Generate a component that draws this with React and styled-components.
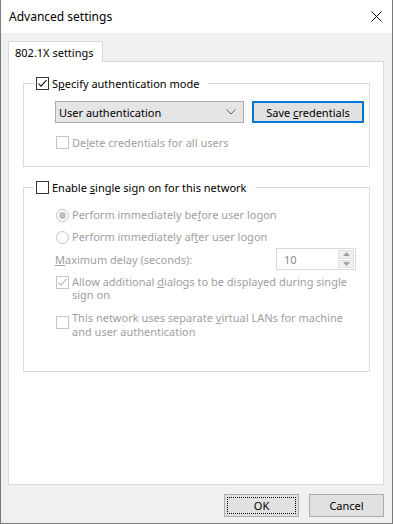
import React from "react";
import styled, { createGlobalStyle } from "styled-components";

const GlobalStyle = createGlobalStyle`
  html, body { margin: 0; padding: 0; }
  body {
    width: 393px;
    height: 524px;
    overflow: hidden;
    font-family: "Noto Sans", "Liberation Sans", sans-serif;
    font-size: 11px;
    color: #000;
    background: #fff;
  }
  * { box-sizing: border-box; }
`;

const Window = styled.div`
  width: 393px;
  height: 524px;
  display: flex;
  flex-direction: column;
  background: #f0f0f0;
  border: 1px solid #7a7a7a;
  border-top: none;
`;

const TitleBar = styled.div`
  height: 33px;
  flex: none;
  background: #fff;
  display: flex;
  align-items: center;
  justify-content: space-between;
  padding: 0 10px 0 8px;
  font-size: 12px;
`;

const CloseIcon = () => (
  <svg width="11" height="11" viewBox="0 0 11 11">
    <path d="M0.5 0.5 L10.5 10.5 M10.5 0.5 L0.5 10.5" stroke="#000" strokeWidth="1" />
  </svg>
);

const Body = styled.div`
  flex: 1;
  display: flex;
  flex-direction: column;
  padding: 8px 8px 0 7px;
`;

const Tab = styled.div`
  width: 95px;
  height: 21px;
  background: #fff;
  border: 1px solid #d9d9d9;
  border-bottom: none;
  padding-left: 6px;
  display: flex;
  align-items: center;
  margin-bottom: -1px;
  position: relative;
  z-index: 1;
`;

const Panel = styled.div`
  height: 424px;
  flex: none;
  background: #fff;
  border: 1px solid #d9d9d9;
  padding: 14px 13px 0 14px;
  display: flex;
  flex-direction: column;
`;

const Group = styled.fieldset`
  margin: ${(p) => p.$mt || 0}px 0 0 0;
  border: 1px solid #dcdcdc;
  padding: 0;
  min-width: 0;
`;

const GroupContent = styled.div`
  display: flex;
  flex-direction: column;
  padding: 0 ${(p) => p.$pr}px ${(p) => p.$pb}px 31px;
  min-height: ${(p) => p.$minh || 0}px;
`;

const Legend = styled.legend`
  margin-left: 10px;
  padding: 0 9px 0 2px;
  height: 14px;
  display: flex;
  align-items: center;
  gap: 3px;
`;

const Row = styled.div`
  display: flex;
  align-items: ${(p) => p.$align || "center"};
  gap: ${(p) => p.$gap ?? 3}px;
  margin-top: ${(p) => p.$mt || 0}px;
  margin-left: ${(p) => p.$ml || 0}px;
  justify-content: ${(p) => p.$justify || "flex-start"};
  line-height: 13px;
  color: ${(p) => (p.$disabled ? "#a0a0a0" : "#000")};
`;

const Label = styled.span`
  line-height: ${(p) => p.$lh || 13}px;
  white-space: nowrap;
`;

const Combo = styled.div`
  width: 189px;
  height: 22px;
  flex: none;
  background: #e5e5e5;
  border: 1px solid #adadad;
  display: flex;
  align-items: center;
  justify-content: space-between;
  padding: 0 7px 0 3px;
`;

const Button = styled.div`
  width: ${(p) => p.$w}px;
  height: ${(p) => p.$h || 23}px;
  flex: none;
  background: #e1e1e1;
  border: 1px solid ${(p) => (p.$default ? "#0078d7" : "#adadad")};
  box-shadow: ${(p) => (p.$default ? "inset 0 0 0 1px #0078d7" : "none")};
  outline: ${(p) => (p.$focus ? "1px dotted #000" : "none")};
  outline-offset: -4px;
  display: flex;
  align-items: center;
  justify-content: center;
`;

const Box = styled.span`
  width: 13px;
  height: 13px;
  flex: none;
  border: 1px solid ${(p) => (p.$disabled ? "#c4c4c4" : "#333")};
  background: #fff;
  display: flex;
  align-items: center;
  justify-content: center;
  margin-top: ${(p) => p.$mt || 0}px;
`;

const Check = ({ disabled }) => (
  <svg width="11" height="11" viewBox="0 0 11 11">
    <path d="M1.5 5.5 L4 8.2 L9.5 2" fill="none" stroke={disabled ? "#b0b0b0" : "#000"} strokeWidth="1.1" />
  </svg>
);

const CheckBox = ({ checked, disabled, mt }) => (
  <Box $disabled={disabled} $mt={mt}>
    {checked && <Check disabled={disabled} />}
  </Box>
);

const RadioCircle = styled.span`
  width: 13px;
  height: 13px;
  flex: none;
  border-radius: 50%;
  border: 1px solid #c4c4c4;
  background: #fff;
  display: flex;
  align-items: center;
  justify-content: center;
  &::after {
    content: "";
    display: ${(p) => (p.$checked ? "block" : "none")};
    width: 7px;
    height: 7px;
    border-radius: 50%;
    background: #c0c0c0;
  }
`;

const U = styled.span`
  text-decoration: underline;
  text-underline-offset: 1px;
`;

const Spin = styled.div`
  width: 80px;
  height: 22px;
  border: 1px solid #d9d9d9;
  background: #fff;
  display: flex;
  align-items: center;
  justify-content: space-between;
  padding: 1px 1px 1px 7px;
  color: #8a8a8a;
`;

const SpinButtons = styled.div`
  width: 16px;
  height: 18px;
  display: flex;
  flex-direction: column;
  gap: 1px;
`;

const SpinBtn = styled.div`
  flex: 1;
  background: #f0f0f0;
  border: 1px solid #e0e0e0;
  display: flex;
  align-items: center;
  justify-content: center;
`;

const Tri = ({ up }) => (
  <svg width="7" height="4" viewBox="0 0 7 4">
    <path d={up ? "M0 4 L3.5 0 L7 4 Z" : "M0 0 L7 0 L3.5 4 Z"} fill="#a0a0a0" />
  </svg>
);

const Chevron = () => (
  <svg width="10" height="6" viewBox="0 0 10 6">
    <path d="M0.5 0.5 L5 5 L9.5 0.5" fill="none" stroke="#606060" strokeWidth="1" />
  </svg>
);

const Footer = styled.div`
  display: flex;
  justify-content: flex-end;
  gap: 10px;
  padding: 9px 0 0 0;
`;

export default function App() {
  return (
    <>
      <GlobalStyle />
      <Window>
        <TitleBar>
          <span>Advanced settings</span>
          <CloseIcon />
        </TitleBar>
        <Body>
          <Tab>802.1X settings</Tab>
          <Panel>
            <Group>
              <Legend>
                <CheckBox checked />
                <Label>
                  S<U>p</U>ecify authentication mode
                </Label>
              </Legend>
              <GroupContent $pr={4} $pb={17}>
                <Row $mt={11} $gap={8}>
                  <Combo>
                    <span>User authentication</span>
                    <Chevron />
                  </Combo>
                  <Button $w={112} $h={22} $default>
                    <span>
                      Save <U>c</U>redentials
                    </span>
                  </Button>
                </Row>
                <Row $mt={13} $ml={1} $disabled>
                  <CheckBox disabled />
                  <Label>
                    De<U>l</U>ete credentials for all users
                  </Label>
                </Row>
              </GroupContent>
            </Group>
            <Group $mt={13}>
              <Legend>
                <CheckBox />
                <Label>
                  Enable <U>s</U>ingle sign on for this network
                </Label>
              </Legend>
              <GroupContent $pr={13} $pb={0} $minh={177}>
                <Row $mt={13} $ml={1} $disabled>
                  <RadioCircle $checked />
                  <Label $lh={16}>
                    Perform immediately be<U>f</U>ore user logon
                  </Label>
                </Row>
                <Row $mt={6} $ml={1} $disabled>
                  <RadioCircle />
                  <Label $lh={16}>
                    Perform immediately af<U>t</U>er user logon
                  </Label>
                </Row>
                <Row $mt={3} $justify="space-between" $disabled>
                  <Label>
                    <U>M</U>aximum delay (seconds):
                  </Label>
                  <Spin>
                    <span>10</span>
                    <SpinButtons>
                      <SpinBtn>
                        <Tri up />
                      </SpinBtn>
                      <SpinBtn>
                        <Tri />
                      </SpinBtn>
                    </SpinButtons>
                  </Spin>
                </Row>
                <Row $mt={5} $ml={1} $align="flex-start" $disabled>
                  <CheckBox checked disabled mt={1} />
                  <Label>
                    Allow additional <U>d</U>ialogs to be displayed during single
                    <br />
                    sign on
                  </Label>
                </Row>
                <Row $mt={10} $ml={1} $align="flex-start" $disabled>
                  <CheckBox disabled mt={5} />
                  <Label $lh={14}>
                    This network uses separate <U>v</U>irtual LANs for machine
                    <br />
                    and user authentication
                  </Label>
                </Row>
              </GroupContent>
            </Group>
          </Panel>
          <Footer>
            <Button $w={75} $focus>
              OK
            </Button>
            <Button $w={75}>Cancel</Button>
          </Footer>
        </Body>
      </Window>
    </>
  );
}
